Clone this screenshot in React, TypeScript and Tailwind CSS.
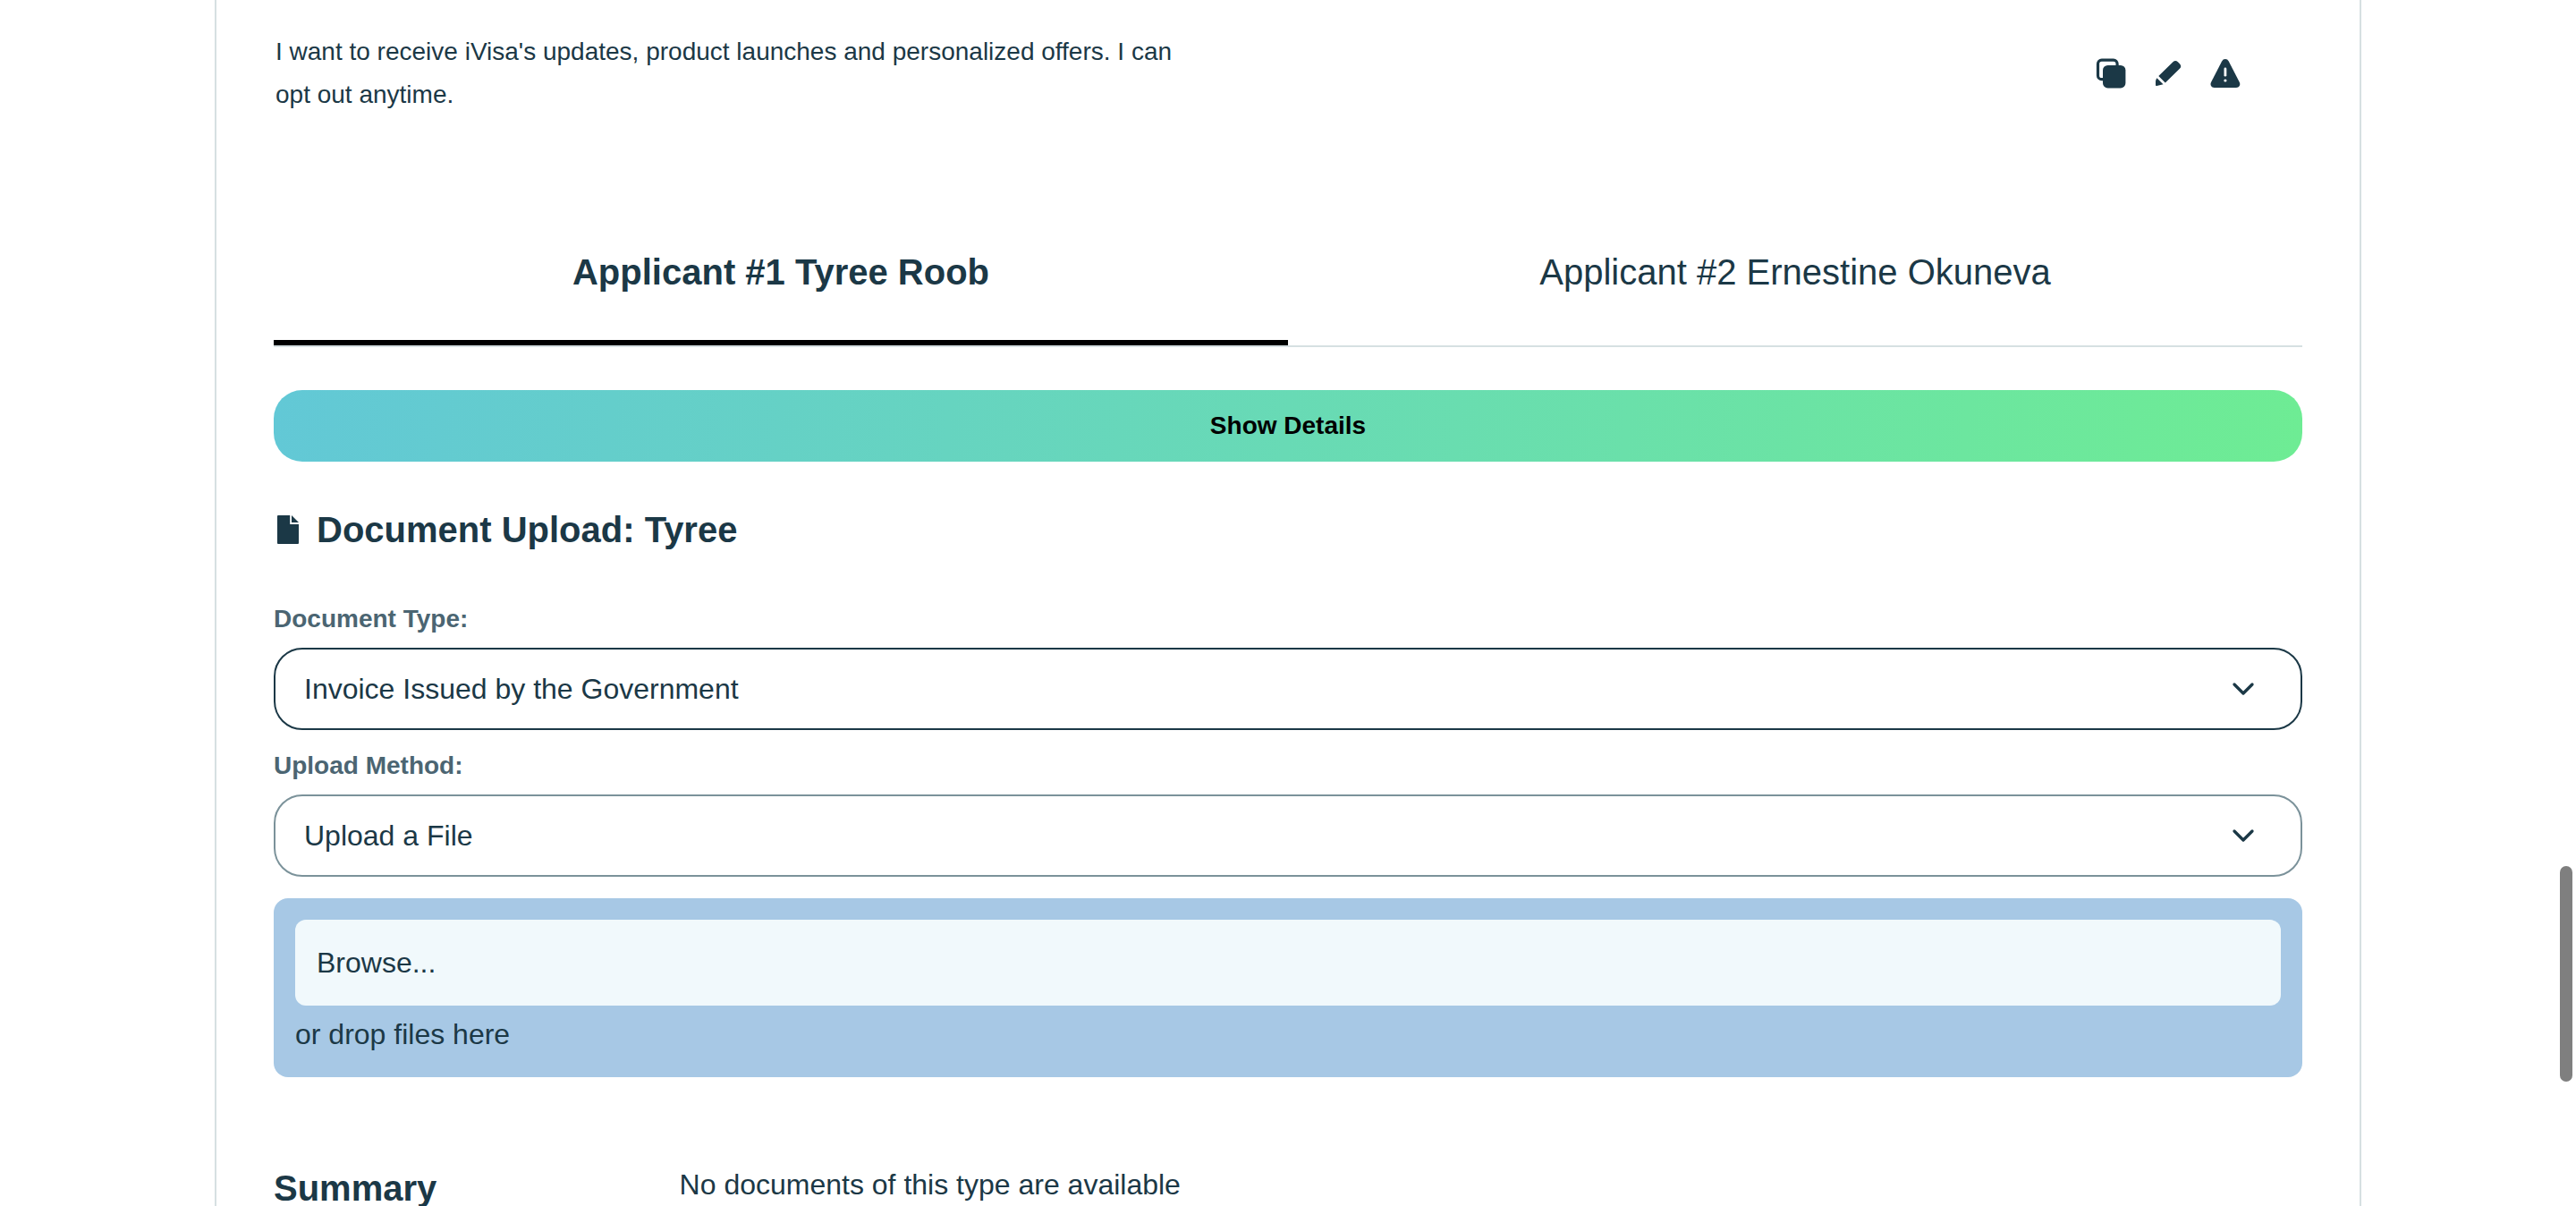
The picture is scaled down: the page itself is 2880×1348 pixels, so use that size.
import { useState } from "react";

function CopyIcon() {
  return (
    <svg viewBox="0 0 40 40" className="size-10" aria-hidden="true">
      <rect x="5.5" y="5.2" width="21.6" height="21.4" rx="4.2" fill="none" stroke="currentColor" strokeWidth="3.2" />
      <rect x="11" y="11" width="25.4" height="25.4" rx="5.5" fill="currentColor" />
    </svg>
  );
}

function PencilIcon() {
  return (
    <svg viewBox="0 0 40 40" className="size-10" fill="currentColor" aria-hidden="true">
      <path d="M25.400 7.300a3.900 3.900 0 0 1 5.500 0l2 2a3.900 3.900 0 0 1 0 5.500L16.800 30.600l-7.500-7.500z" />
      <path d="M7.500 25.200l7 7-7.300 1.700a1 1 0 0 1-1.200-1v-3.600c0-1.500.5-3 1.500-4.100z" />
    </svg>
  );
}

function WarningIcon() {
  return (
    <svg viewBox="0 0 40 40" className="size-10" aria-hidden="true">
      <path
        d="M16.1 6.400a4.300 4.300 0 0 1 7.600 0l12 23.400c1.600 3.200-.2 6.200-3.700 6.200H7.700c-3.500 0-5.200-3-3.600-6.200z"
        fill="currentColor"
      />
      <path d="M19.900 15v7.200" stroke="white" strokeWidth="2.800" strokeLinecap="round" />
      <circle cx="19.900" cy="28" r="1.600" fill="white" />
    </svg>
  );
}

function FileIcon() {
  return (
    <svg viewBox="0 0 24 32" className="h-8 w-6" fill="currentColor" aria-hidden="true">
      <path d="M1 0h13.200v10H24v21a1 1 0 0 1-1 1H1a1 1 0 0 1-1-1V1a1 1 0 0 1 1-1z" />
      <path d="M16 0l8 8h-8z" />
    </svg>
  );
}

function SelectField({
  id,
  label,
  options,
  borderClass,
}: {
  id: string;
  label: string;
  options: string[];
  borderClass: string;
}) {
  return (
    <div>
      <label htmlFor={id} className="block text-[28px] leading-12 font-bold text-[#4b6572]">
        {label}
      </label>
      <div className="relative mt-2">
        <select
          id={id}
          className={`block h-[92px] w-full appearance-none rounded-[32px] border-2 bg-white pr-28 pl-8 text-[32px] text-[#1b3846] ${borderClass}`}
        >
          {options.map((option) => (
            <option key={option}>{option}</option>
          ))}
        </select>
        <svg
          viewBox="0 0 24 24"
          className="pointer-events-none absolute inset-y-0 right-[46px] my-auto size-10"
          fill="none"
          stroke="currentColor"
          strokeWidth="2"
          strokeLinecap="round"
          strokeLinejoin="round"
          aria-hidden="true"
        >
          <path d="M6 9l6 6 6-6" />
        </svg>
      </div>
    </div>
  );
}

const applicants = ["Applicant #1 Tyree Roob", "Applicant #2 Ernestine Okuneva"];

export default function App() {
  const [active, setActive] = useState(0);

  return (
    <div className="relative h-screen bg-white font-['Liberation_Sans',Arial,sans-serif] text-[#1b3846]">
      <div className="h-full overflow-y-auto [scrollbar-width:none]">
        <main className="mx-auto min-h-full max-w-[2400px] border-x-2 border-[#d6e0e2] px-16 pt-[34px] pb-12">
          <div className="flex items-center justify-between pr-[66px] pl-0.5">
            <p className="max-w-[1040px] text-[28px] leading-12">
              I want to receive iVisa's updates, product launches and personalized offers. I can opt out anytime.
            </p>
            <div className="flex gap-6">
              <button type="button" aria-label="Copy">
                <CopyIcon />
              </button>
              <button type="button" aria-label="Edit">
                <PencilIcon />
              </button>
              <button type="button" aria-label="Report">
                <WarningIcon />
              </button>
            </div>
          </div>

          <div role="tablist" className="mt-24 flex border-b-2 border-[#d6e0e2]">
            {applicants.map((name, index) => (
              <button
                key={name}
                type="button"
                role="tab"
                aria-selected={index === active}
                onClick={() => setActive(index)}
                className={`flex-1 border-b-[6px] pt-[50px] pb-12 text-[40px] leading-14 ${
                  index === active ? "border-black font-bold" : "border-transparent"
                }`}
              >
                {name}
              </button>
            ))}
          </div>

          <button
            type="button"
            className="mt-12 block h-20 w-full rounded-[32px] bg-[linear-gradient(95deg,#62c8d6,#6eec94)] text-[28px] font-bold text-black"
          >
            Show Details
          </button>

          <h2 className="mt-12 flex items-center gap-5 pl-1 text-[40px] leading-14 font-bold">
            <FileIcon />
            Document Upload: Tyree
          </h2>

          <div className="mt-12 flex flex-col gap-4">
            <SelectField
              id="document-type"
              label="Document Type:"
              options={["Invoice Issued by the Government"]}
              borderClass="border-[#1b3846]"
            />
            <SelectField
              id="upload-method"
              label="Upload Method:"
              options={["Upload a File"]}
              borderClass="border-[#7b929a]"
            />
          </div>

          <div className="mt-6 rounded-2xl bg-[#a7c8e5] p-6 text-[32px] leading-12">
            <label htmlFor="file" className="block cursor-pointer rounded-xl bg-[#f1f9fc] p-6">
              Browse...
              <input id="file" type="file" className="sr-only" />
            </label>
            <p className="mt-2">or drop files here</p>
          </div>

          <section className="mt-24 flex">
            <h2 className="w-1/5 text-[40px] leading-14 font-bold">Summary</h2>
            <p className="flex-1 text-[32px] leading-12">No documents of this type are available</p>
          </section>
        </main>
      </div>
      <div className="absolute top-[968px] right-1 h-[241px] w-3.5 rounded-full bg-[#7f7f7f]" />
    </div>
  );
}
